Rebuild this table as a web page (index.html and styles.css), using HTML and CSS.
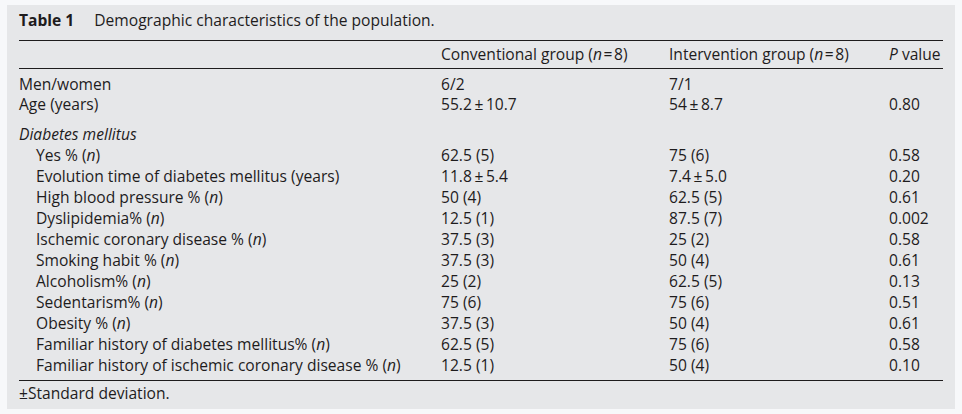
FILE: index.html
```html
<!DOCTYPE html>
<html lang="en">
<head>
<meta charset="utf-8">
<title>Table 1</title>
<link rel="stylesheet" href="styles.css">
</head>
<body>
<div class="panel">
  <div class="caption"><span class="label">Table 1</span><span class="title">Demographic characteristics of the population.</span></div>
  <table class="data">
    <colgroup>
      <col class="c1"><col class="c2"><col class="c3"><col class="c4">
    </colgroup>
    <thead>
      <tr>
        <th></th>
        <th>Conventional group (<i>n</i>&#8202;=&#8202;8)</th>
        <th>Intervention group (<i>n</i>&#8202;=&#8202;8)</th>
        <th><i>P</i> value</th>
      </tr>
    </thead>
    <tbody>
      <tr class="tight first"><td>Men/women</td><td>6/2</td><td>7/1</td><td></td></tr>
      <tr class="tight"><td>Age (years)</td><td>55.2&#8201;±&#8201;10.7</td><td>54&#8201;±&#8201;8.7</td><td>0.80</td></tr>
      <tr class="group"><td><i>Diabetes mellitus</i></td><td></td><td></td><td></td></tr>
      <tr class="sub"><td>Yes % (<i>n</i>)</td><td>62.5 (5)</td><td>75 (6)</td><td>0.58</td></tr>
      <tr class="sub"><td>Evolution time of diabetes mellitus (years)</td><td>11.8&#8201;±&#8201;5.4</td><td>7.4&#8201;±&#8201;5.0</td><td>0.20</td></tr>
      <tr class="sub"><td>High blood pressure % (<i>n</i>)</td><td>50 (4)</td><td>62.5 (5)</td><td>0.61</td></tr>
      <tr class="sub"><td>Dyslipidemia% (<i>n</i>)</td><td>12.5 (1)</td><td>87.5 (7)</td><td>0.002</td></tr>
      <tr class="sub"><td>Ischemic coronary disease % (<i>n</i>)</td><td>37.5 (3)</td><td>25 (2)</td><td>0.58</td></tr>
      <tr class="sub"><td>Smoking habit % (<i>n</i>)</td><td>37.5 (3)</td><td>50 (4)</td><td>0.61</td></tr>
      <tr class="sub"><td>Alcoholism% (<i>n</i>)</td><td>25 (2)</td><td>62.5 (5)</td><td>0.13</td></tr>
      <tr class="sub"><td>Sedentarism% (<i>n</i>)</td><td>75 (6)</td><td>75 (6)</td><td>0.51</td></tr>
      <tr class="sub"><td>Obesity % (<i>n</i>)</td><td>37.5 (3)</td><td>50 (4)</td><td>0.61</td></tr>
      <tr class="sub"><td>Familiar history of diabetes mellitus% (<i>n</i>)</td><td>62.5 (5)</td><td>75 (6)</td><td>0.58</td></tr>
      <tr class="sub last"><td>Familiar history of ischemic coronary disease % (<i>n</i>)</td><td>12.5 (1)</td><td>50 (4)</td><td>0.10</td></tr>
    </tbody>
  </table>
  <div class="footnote">±Standard deviation.</div>
</div>
</body>
</html>
```

FILE: styles.css
```css
html, body {
  margin: 0;
  padding: 0;
  background: #f7f8fa;
}
body {
  padding: 5px 7px;
  font-family: "Open Sans", "DejaVu Sans", sans-serif;
  font-size: 15.6px;
  color: #1e1c1d;
}
.panel {
  width: 948px;
  height: 404px;
  box-sizing: border-box;
  background: #e6e7e9;
  padding: 5px 12px 0 12px;
}
.caption {
  line-height: 21px;
  height: 21px;
  margin-bottom: 9px;
}
.label {
  font-weight: 700;
  margin-right: 20px;
}
.data {
  width: 924px;
  border-collapse: collapse;
  table-layout: fixed;
  border-top: 1px solid #1e1c1d;
  border-bottom: 1px solid #1e1c1d;
}
.c1 { width: 422px; }
.c2 { width: 228px; }
.c3 { width: 220px; }
.c4 { width: 54px; }
.data th {
  font-weight: 400;
  text-align: left;
  height: 27px;
  padding: 0;
  line-height: 21px;
  border-bottom: 1px solid #1e1c1d;
  white-space: nowrap;
}
.data td {
  padding: 0;
  line-height: 21px;
  height: 21px;
  white-space: nowrap;
}
.data tr.tight td {
  line-height: 20px;
  height: 20px;
}
.data tr.first td {
  padding-top: 5px;
}
.data tr.group td {
  padding-top: 10px;
}
.data tr.sub td:first-child {
  padding-left: 17px;
}
.data tr.last td {
  padding-bottom: 4px;
}
.footnote {
  line-height: 21px;
  padding-top: 2px;
}
```
